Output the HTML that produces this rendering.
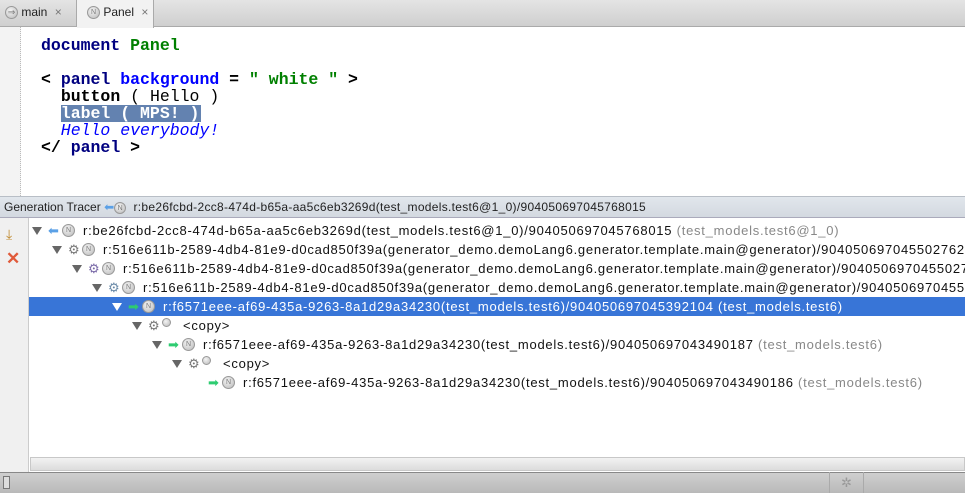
<!DOCTYPE html>
<html><head><meta charset="utf-8"><style>
*{margin:0;padding:0;box-sizing:border-box}
body{width:965px;height:493px;overflow:hidden;background:#fff;font-family:"Liberation Sans",sans-serif;position:relative}
.abs{position:absolute}
.tabs{left:0;top:0;width:965px;height:27px;background:linear-gradient(#e4e4e4,#cfcfcf);border-bottom:1px solid #aaa}
.tab{top:0;height:26px;font-size:12px;color:#222;line-height:24px;padding-left:26px}
.ci{display:inline-block;width:13px;height:13px;border-radius:50%;background:radial-gradient(circle at 40% 35%,#f4f4f4,#b9b9b9);border:1px solid #999;font-size:7px;line-height:11px;text-align:center;color:#777;vertical-align:middle;letter-spacing:0}
.gutter{left:0;top:27px;width:21px;height:169px;background:#f3f3f3;border-right:1px dotted #bbb}
.code{font-family:"Liberation Mono",monospace;font-size:16.5px;font-weight:bold;line-height:17px;white-space:pre;left:41px}
.kw{color:#000080}.gr{color:#008000}.bl{color:#0000ff}.nm{font-weight:normal;color:#000}
.hdr{left:0;top:196px;width:965px;height:22px;background:linear-gradient(#e1e6ec,#d3d9e0);border-top:1px solid #b8bec6;border-bottom:1px solid #aab;font-size:12px;line-height:21px;color:#222;overflow:hidden;white-space:nowrap}
.side{left:0;top:218px;width:29px;height:254px;background:#f0f0f0;border-right:1px solid #ccc}
.row{left:29px;height:19px;width:936px;font-size:13px;line-height:19px;color:#111;white-space:nowrap;overflow:hidden}
.row span.g{color:#888}
.txt{letter-spacing:0.75px}
.sel{background:#3875d7;color:#fff}
.tri{position:absolute;top:6px;width:0;height:0;border-left:5px solid transparent;border-right:5px solid transparent;border-top:8px solid #666}
.sel .tri{border-top-color:#fff}
.ic{position:absolute;top:3px}
.txt{position:absolute;top:0}
.scroll{left:30px;top:457px;width:935px;height:14px;background:linear-gradient(#f2f2f2,#dcdcdc);border:1px solid #c8c8c8}
.status{left:0;top:472px;width:965px;height:21px;background:linear-gradient(#cfcfcf,#b9b9b9);border-top:1px solid #888}
</style></head><body>
<div class="abs tabs"></div>
<div class="abs" style="left:76px;top:0;width:1px;height:27px;background:#aaa"></div>
<div class="abs" style="left:77px;top:0;width:77px;height:28px;background:#f2f2f2;border-right:1px solid #aaa"></div>
<div class="abs tab" style="left:5px;padding-left:0"><span class="ci" style="font-size:9px">⇒</span> main <span style="color:#777;margin-left:4px">×</span></div>
<div class="abs tab" style="left:87px;padding-left:0"><span class="ci">N</span> Panel <span style="color:#777;margin-left:4px">×</span></div>
<div class="abs gutter"></div>
<div class="abs code" style="top:37px"><span class="kw">document</span> <span class="gr">Panel</span></div>
<div class="abs code" style="top:71px">&lt; <span class="kw">panel</span> <span class="bl">background</span> = <span class="gr">"</span> <span class="gr">white</span> <span class="gr">"</span> &gt;</div>
<div class="abs code" style="top:88px">  <span class="kw" style="color:#000">button</span> <span class="nm">( Hello )</span></div>
<div class="abs" style="left:61px;top:105px;width:140px;height:17px;background:#6382b0"></div>
<div class="abs code" style="top:105px;color:#fff">  label ( MPS! )</div>
<div class="abs code" style="top:122px;color:#0000ff;font-weight:normal;font-style:italic">  Hello everybody!</div>
<div class="abs code" style="top:139px">&lt;/ <span class="kw">panel</span> &gt;</div>

<div class="abs hdr"><span style="margin-left:4px">Generation Tracer</span> <span style="color:#5aa0e6">⬅</span><span class="ci" style="width:12px;height:12px">N</span> <span style="letter-spacing:0.3px;margin-left:4px">r:be26fcbd-2cc8-474d-b65a-aa5c6eb3269d(test_models.test6@1_0)/904050697045768015</span></div>
<div class="abs side"></div>
<div class="abs" style="left:6px;top:226px;color:#c08a30;font-size:14px">⤓</div>
<div class="abs" style="left:6px;top:249px;color:#e05a3a;font-size:17px;font-weight:bold">✕</div>

<div class="abs row" style="top:221px"><i class="tri" style="left:3px"></i><span class="ic" style="left:19px;color:#5aa0e6;top:0">⬅</span><span class="ic ci" style="left:33px">N</span><span class="txt" style="left:54px">r:be26fcbd-2cc8-474d-b65a-aa5c6eb3269d(test_models.test6@1_0)/904050697045768015 <span class="g">(test_models.test6@1_0)</span></span></div>
<div class="abs row" style="top:240px"><i class="tri" style="left:23px"></i><span class="ic" style="left:39px;color:#777;top:0">⚙</span><span class="ic ci" style="left:53px">N</span><span class="txt" style="left:74px">r:516e611b-2589-4db4-81e9-d0cad850f39a(generator_demo.demoLang6.generator.template.main@generator)/904050697045502762 <span class="g">(generator_demo</span></span></div>
<div class="abs row" style="top:259px"><i class="tri" style="left:43px"></i><span class="ic" style="left:59px;color:#7a6aa8;top:0">⚙</span><span class="ic ci" style="left:73px">N</span><span class="txt" style="left:94px">r:516e611b-2589-4db4-81e9-d0cad850f39a(generator_demo.demoLang6.generator.template.main@generator)/904050697045502756 <span class="g">(generator_demo</span></span></div>
<div class="abs row" style="top:278px"><i class="tri" style="left:63px"></i><span class="ic" style="left:79px;color:#6a8aa8;top:0">⚙</span><span class="ic ci" style="left:93px">N</span><span class="txt" style="left:114px">r:516e611b-2589-4db4-81e9-d0cad850f39a(generator_demo.demoLang6.generator.template.main@generator)/904050697045502741</span></div>
<div class="abs row sel" style="top:297px"><i class="tri" style="left:83px"></i><span class="ic" style="left:99px;color:#2ecc71;top:0">➡</span><span class="ic ci" style="left:113px">N</span><span class="txt" style="left:134px">r:f6571eee-af69-435a-9263-8a1d29a34230(test_models.test6)/904050697045392104 (test_models.test6)</span></div>
<div class="abs row" style="top:316px"><i class="tri" style="left:103px"></i><span class="ic" style="left:119px;color:#777;top:0">⚙</span><span class="ic ci" style="left:133px;width:9px;height:9px;top:2px"></span><span class="txt" style="left:154px">&lt;copy&gt;</span></div>
<div class="abs row" style="top:335px"><i class="tri" style="left:123px"></i><span class="ic" style="left:139px;color:#2ecc71;top:0">➡</span><span class="ic ci" style="left:153px">N</span><span class="txt" style="left:174px">r:f6571eee-af69-435a-9263-8a1d29a34230(test_models.test6)/904050697043490187 <span class="g">(test_models.test6)</span></span></div>
<div class="abs row" style="top:354px"><i class="tri" style="left:143px"></i><span class="ic" style="left:159px;color:#777;top:0">⚙</span><span class="ic ci" style="left:173px;width:9px;height:9px;top:2px"></span><span class="txt" style="left:194px">&lt;copy&gt;</span></div>
<div class="abs row" style="top:373px"><span class="ic" style="left:179px;color:#2ecc71;top:0">➡</span><span class="ic ci" style="left:193px">N</span><span class="txt" style="left:214px">r:f6571eee-af69-435a-9263-8a1d29a34230(test_models.test6)/904050697043490186 <span class="g">(test_models.test6)</span></span></div>

<div class="abs scroll"></div>
<div class="abs status"></div>
<div class="abs" style="left:3px;top:476px;width:7px;height:13px;border:1px solid #777;background:#ddd"></div>
<div class="abs" style="left:829px;top:472px;width:35px;height:21px;border-left:1px solid #aaa;border-right:1px solid #aaa;color:#999;font-size:13px;text-align:center;line-height:21px">✲</div>
</body></html>
